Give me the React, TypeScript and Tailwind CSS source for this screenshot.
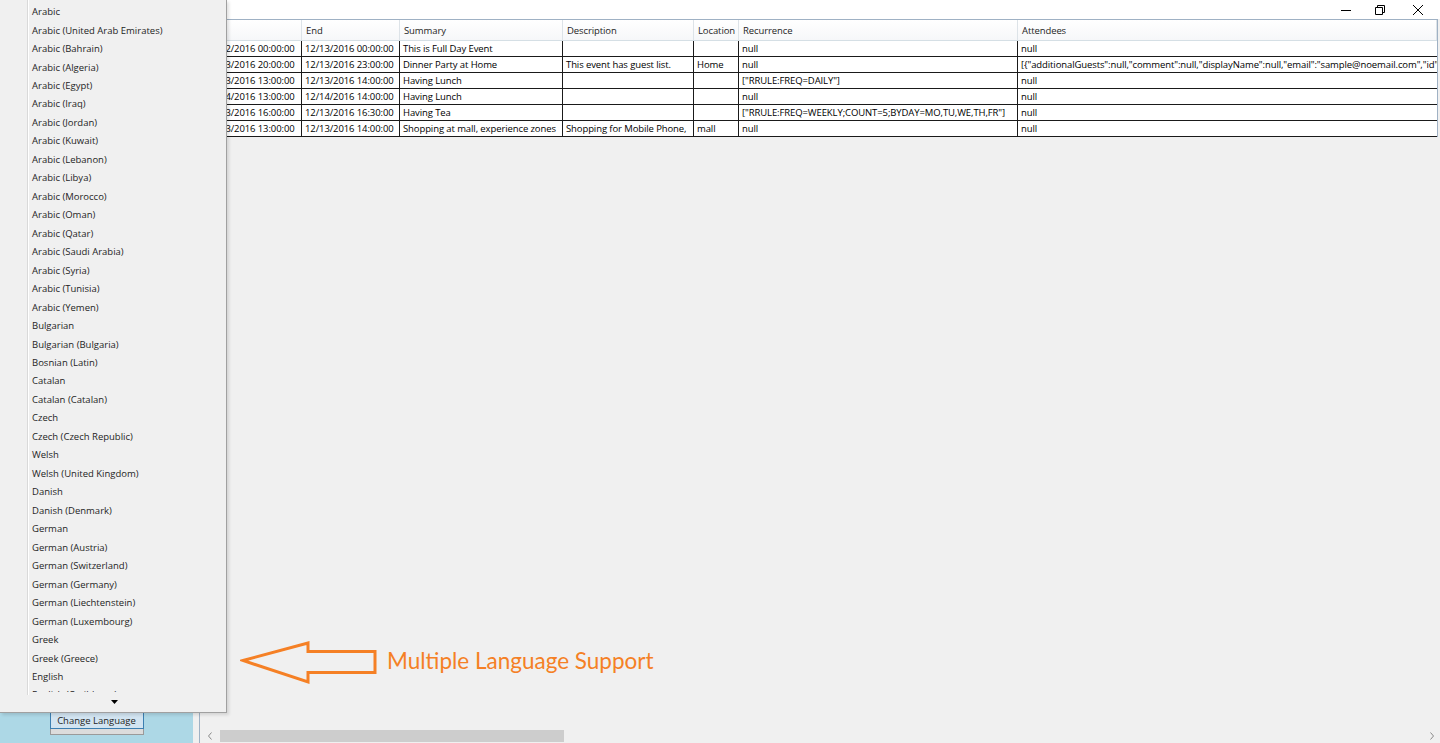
import React from 'react';

const languages = [
  'Arabic',
  'Arabic (United Arab Emirates)',
  'Arabic (Bahrain)',
  'Arabic (Algeria)',
  'Arabic (Egypt)',
  'Arabic (Iraq)',
  'Arabic (Jordan)',
  'Arabic (Kuwait)',
  'Arabic (Lebanon)',
  'Arabic (Libya)',
  'Arabic (Morocco)',
  'Arabic (Oman)',
  'Arabic (Qatar)',
  'Arabic (Saudi Arabia)',
  'Arabic (Syria)',
  'Arabic (Tunisia)',
  'Arabic (Yemen)',
  'Bulgarian',
  'Bulgarian (Bulgaria)',
  'Bosnian (Latin)',
  'Catalan',
  'Catalan (Catalan)',
  'Czech',
  'Czech (Czech Republic)',
  'Welsh',
  'Welsh (United Kingdom)',
  'Danish',
  'Danish (Denmark)',
  'German',
  'German (Austria)',
  'German (Switzerland)',
  'German (Germany)',
  'German (Liechtenstein)',
  'German (Luxembourg)',
  'Greek',
  'Greek (Greece)',
  'English',
  'English (Caribbean)',
];

const columns = [
  { title: 'Start', width: 'w-[102px]', pad: 'pl-[6px]' },
  { title: 'End', width: 'w-[98px]', pad: 'pl-[3px]' },
  { title: 'Summary', width: 'w-[163px]', pad: 'pl-[3px]' },
  { title: 'Description', width: 'w-[131px]', pad: 'pl-[3px]' },
  { title: 'Location', width: 'w-[45px]', pad: 'pl-[3px]' },
  { title: 'Recurrence', width: 'w-[279px]', pad: 'pl-[3px]' },
  { title: 'Attendees', width: 'flex-1', pad: 'pl-[3px]' },
];

const events = [
  ['12/12/2016 00:00:00', '12/13/2016 00:00:00', 'This is Full Day Event', '', '', 'null', 'null'],
  [
    '12/13/2016 20:00:00',
    '12/13/2016 23:00:00',
    'Dinner Party at Home',
    'This event has guest list.',
    'Home',
    'null',
    '[{"additionalGuests":null,"comment":null,"displayName":null,"email":"sample@noemail.com","id":null,"optional":null}]',
  ],
  ['12/13/2016 13:00:00', '12/13/2016 14:00:00', 'Having Lunch', '', '', '["RRULE:FREQ=DAILY"]', 'null'],
  ['12/14/2016 13:00:00', '12/14/2016 14:00:00', 'Having Lunch', '', '', 'null', 'null'],
  [
    '12/13/2016 16:00:00',
    '12/13/2016 16:30:00',
    'Having Tea',
    '',
    '',
    '["RRULE:FREQ=WEEKLY;COUNT=5;BYDAY=MO,TU,WE,TH,FR"]',
    'null',
  ],
  [
    '12/13/2016 13:00:00',
    '12/13/2016 14:00:00',
    'Shopping at mall, experience zones',
    'Shopping for Mobile Phone,',
    'mall',
    'null',
    'null',
  ],
];

const uiFont = "font-['Open_Sans','Noto_Sans',sans-serif]";

const WindowControls = () => (
  <div className="flex items-center h-full">
    <div className="w-[31px] flex justify-center">
      <svg width="10" height="10" viewBox="0 0 10 10">
        <path d="M0 5.5h10" stroke="#000" strokeWidth="1" />
      </svg>
    </div>
    <div className="w-[38px] flex justify-center">
      <svg width="10" height="10" viewBox="0 0 10 10" fill="none" stroke="#000" strokeWidth="1">
        <path d="M0.5 2.5h7v7h-7z" />
        <path d="M2.5 2.5v-2h7v7h-2" />
      </svg>
    </div>
    <div className="w-[38px] mr-[3px] flex justify-center">
      <svg width="10" height="10" viewBox="0 0 10 10" stroke="#000" strokeWidth="1">
        <path d="M0 0l10 10M10 0L0 10" />
      </svg>
    </div>
  </div>
);

const EventGrid = () => (
  <div className="mr-[2px] border-t border-r border-[#9fb1c4] text-[9.5px] tracking-[-0.1px]">
    <div className="flex h-[21px] bg-gradient-to-b from-white to-[#f6f7f9] border-b border-[#d5dfe5]">
      {columns.map((col) => (
        <div
          key={col.title}
          className={`${col.width} shrink-0 min-w-0 border-r border-[#dde3e8] pl-[4px] pt-[3px] flex items-center text-[#1e1e1e] whitespace-nowrap overflow-hidden`}
        >
          {col.title}
        </div>
      ))}
    </div>
    {events.map((row, i) => (
      <div key={i} className="flex h-[16px] bg-white border-b border-[#1a1a1a]">
        {row.map((cell, j) => (
          <div
            key={j}
            className={`${columns[j].width} ${columns[j].pad} pt-[1px] shrink-0 min-w-0 ${j < row.length - 1 ? 'border-r border-[#1a1a1a]' : ''} flex items-center text-black whitespace-nowrap overflow-hidden`}
          >
            {cell}
          </div>
        ))}
      </div>
    ))}
  </div>
);

const HorizontalScrollbar = () => (
  <div className="h-[14px] flex items-center">
    <div className="w-[20px] flex justify-center">
      <svg width="6" height="8" viewBox="0 0 6 8" fill="none" stroke="#8a8a8a" strokeWidth="1">
        <path d="M4.5 0.5L1.5 4l3 3.5" />
      </svg>
    </div>
    <div className="w-[344px] h-[12px] bg-[#cdcdcd]" />
    <div className="flex-1" />
    <div className="w-[16px] flex justify-center">
      <svg width="6" height="8" viewBox="0 0 6 8" fill="none" stroke="#8a8a8a" strokeWidth="1">
        <path d="M1.5 0.5L4.5 4l-3 3.5" />
      </svg>
    </div>
  </div>
);

const LanguagePopup = () => (
  <div className="absolute left-0 top-0 w-[227px] h-[713px] bg-[#f0f0f0] border-r border-b border-[#a0a0a0] shadow-[2px_2px_3px_rgba(0,0,0,0.12)] flex flex-col">
    <div className="flex-1 relative overflow-hidden">
      <div className="absolute left-[27px] top-0 bottom-0 w-[2px] border-l border-[#d9d9d9] bg-white" />
      <div className="pt-[3px] h-[692px] overflow-hidden">
        {languages.map((lang) => (
          <div
            key={lang}
            className="h-[18.47px] pl-[32px] flex items-center text-[9.5px] text-[#1e1e1e] whitespace-nowrap"
          >
            {lang}
          </div>
        ))}
      </div>
    </div>
    <div className="h-[17px] flex justify-center items-start">
      <svg width="7" height="4" viewBox="0 0 7 4" className="ml-[2px] mt-[5px]">
        <path d="M0 0h7L3.5 4z" fill="#000" />
      </svg>
    </div>
  </div>
);

const Annotation = () => (
  <div className="absolute left-[240px] top-[640px] flex items-center gap-[9px]">
    <svg width="138" height="45" viewBox="0 0 138 45" fill="none">
      <path
        d="M3 20.5L68 3v8.5h67v21H68v9.5z"
        stroke="#f58025"
        strokeWidth="3"
        strokeLinejoin="miter"
      />
    </svg>
    <span className="font-['Lato','Open_Sans',sans-serif] text-[22.5px] text-[#f58025] leading-none mb-[3px]">
      Multiple Language Support
    </span>
  </div>
);

export default function App() {
  return (
    <div className={`${uiFont} relative w-[1440px] h-[743px] overflow-hidden bg-[#f0f0f0] flex`}>
      <div className="w-[193px] shrink-0 bg-[#add8e6] flex flex-col justify-end items-center pb-[8px]">
        <div className="w-[94px] flex flex-col">
          <button className="h-[17px] border border-[#3c7fb1] bg-[#d2e4f1] text-[9.5px] leading-none text-[#1e1e1e]">
            Change Language
          </button>
          <div className="h-[6px] bg-[#dcdcdc] border border-t-0 border-[#9a9a9a]" />
        </div>
      </div>
      <div className="w-[6px] shrink-0" />
      <div className="flex-1 min-w-0 overflow-hidden flex flex-col border-l border-[#9fb1c4]">
        <div className="h-[19px] shrink-0 bg-white flex justify-end">
          <WindowControls />
        </div>
        <EventGrid />
        <div className="flex-1" />
        <HorizontalScrollbar />
      </div>
      <LanguagePopup />
      <Annotation />
    </div>
  );
}
